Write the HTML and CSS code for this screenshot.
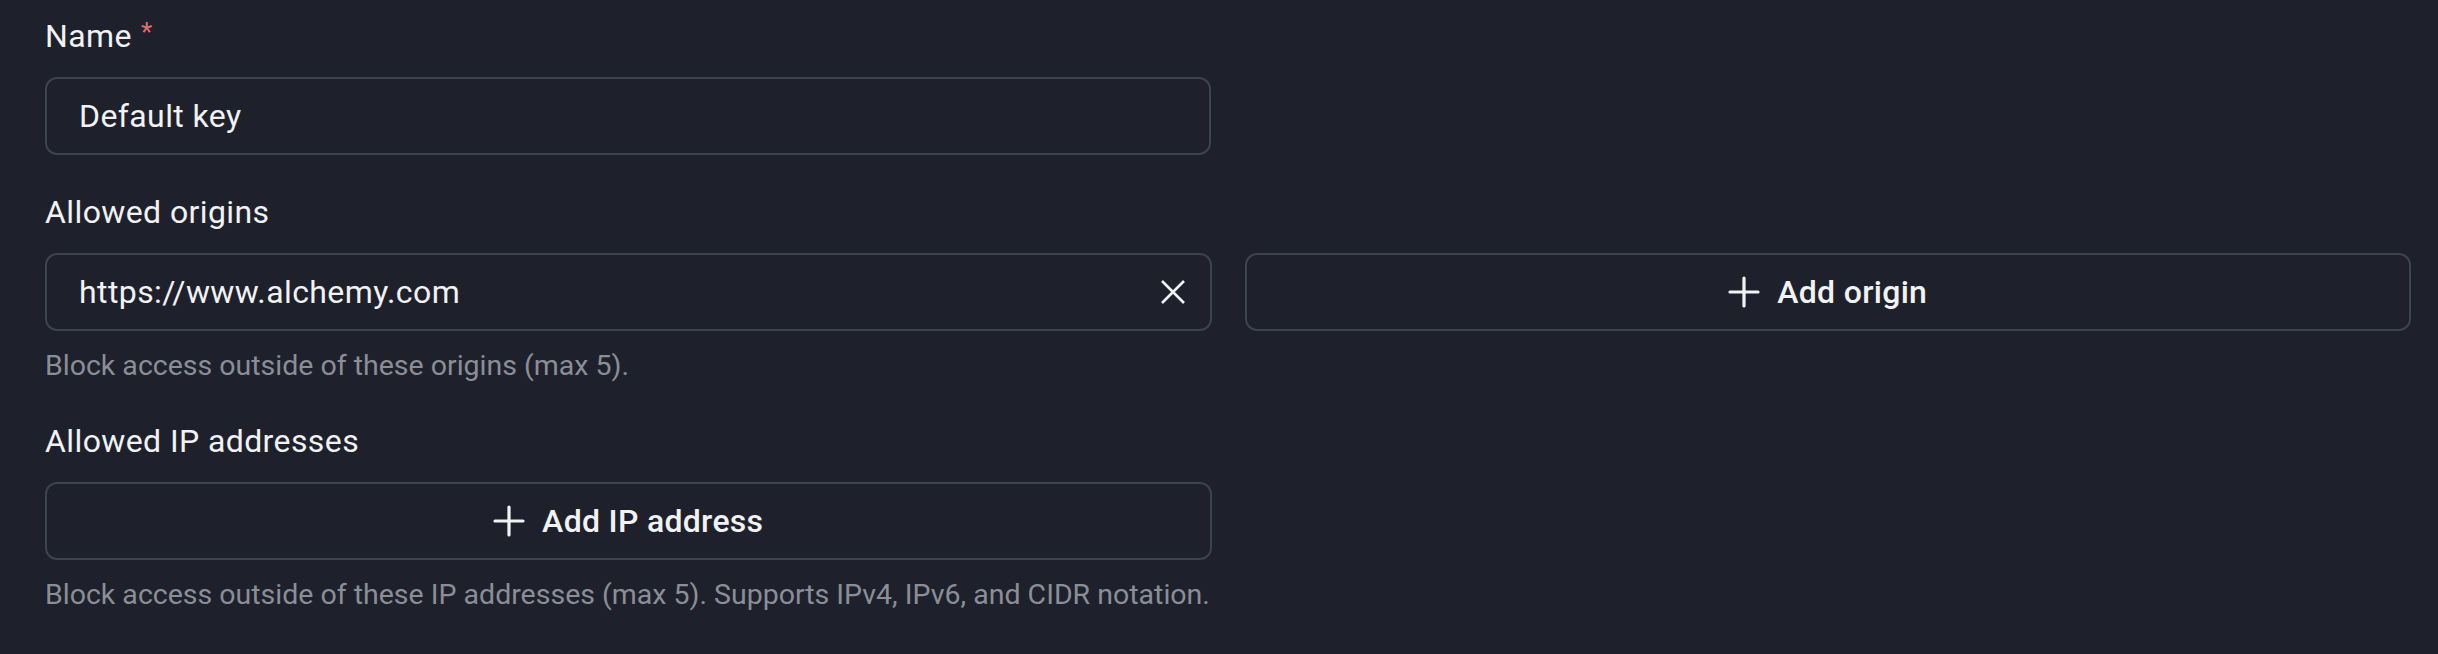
FILE: index.html
```html
<!DOCTYPE html>
<html lang="en">
<head>
<meta charset="utf-8">
<title>API key</title>
<link rel="stylesheet" href="styles.css">
</head>
<body>
<form class="form">
  <div class="field">
    <label class="label">Name<span class="req">*</span></label>
    <div class="row">
      <div class="input"><span class="value">Default key</span></div>
    </div>
  </div>
  <div class="field">
    <label class="label">Allowed origins</label>
    <div class="row two">
      <div class="input">
        <span class="value">https://www.alchemy.com</span>
        <svg class="clear" width="24" height="24" viewBox="0 0 24 24"><path d="M1 1L23 23M23 1L1 23" stroke="#eef0f2" stroke-width="2.6" fill="none"/></svg>
      </div>
      <div class="btn">
        <svg class="plus" width="32" height="32" viewBox="0 0 32 32"><path d="M16 2V30M2 16H30" stroke="#f2f3f5" stroke-width="3.2" stroke-linecap="round" fill="none"/></svg>
        <span>Add origin</span>
      </div>
    </div>
    <p class="help">Block access outside of these origins (max 5).</p>
  </div>
  <div class="field">
    <label class="label">Allowed IP addresses</label>
    <div class="row two">
      <div class="btn">
        <svg class="plus" width="32" height="32" viewBox="0 0 32 32"><path d="M16 2V30M2 16H30" stroke="#f2f3f5" stroke-width="3.2" stroke-linecap="round" fill="none"/></svg>
        <span>Add IP address</span>
      </div>
    </div>
    <p class="help">Block access outside of these IP addresses (max 5). Supports IPv4, IPv6, and CIDR notation.</p>
  </div>
</form>
</body>
</html>
```
FILE: styles.css
```css
html, body {
  margin: 0;
  padding: 0;
  background: #1e212b;
}
body {
  font-family: Roboto, "Liberation Sans", sans-serif;
  color: #f1f2f4;
  padding: 12px 27px 0 45px;
}
.form {
  display: flex;
  flex-direction: column;
  gap: 37px;
}
.field {
  display: flex;
  flex-direction: column;
}
.label {
  font-size: 32px;
  line-height: 40px;
  margin-bottom: 21px;
  font-weight: 400;
  letter-spacing: 0.4px;
}
.req {
  color: #e26f6c;
  font-size: 26px;
  margin-left: 9px;
  vertical-align: 6px;
}
.row {
  display: grid;
  grid-template-columns: 1166px;
}
.row.two {
  grid-template-columns: 1fr 1fr;
  column-gap: 33px;
}
.input {
  height: 78px;
  box-sizing: border-box;
  border: 2px solid #3e424c;
  border-radius: 12px;
  display: flex;
  align-items: center;
  justify-content: space-between;
  padding: 0 25px 0 32px;
  font-size: 32px;
  letter-spacing: 0.4px;
}
.value {
  line-height: 40px;
}
.clear {
  display: block;
  flex: none;
}
.btn {
  height: 78px;
  box-sizing: border-box;
  border: 2px solid #3e424c;
  border-radius: 12px;
  display: flex;
  align-items: center;
  justify-content: center;
  gap: 17px;
  font-size: 32px;
  font-weight: 500;
  letter-spacing: 0.3px;
}
.plus {
  display: block;
  flex: none;
}
.help {
  margin: 17px 0 0;
  font-size: 28.5px;
  line-height: 36px;
  color: #8b8e97;
}
```
